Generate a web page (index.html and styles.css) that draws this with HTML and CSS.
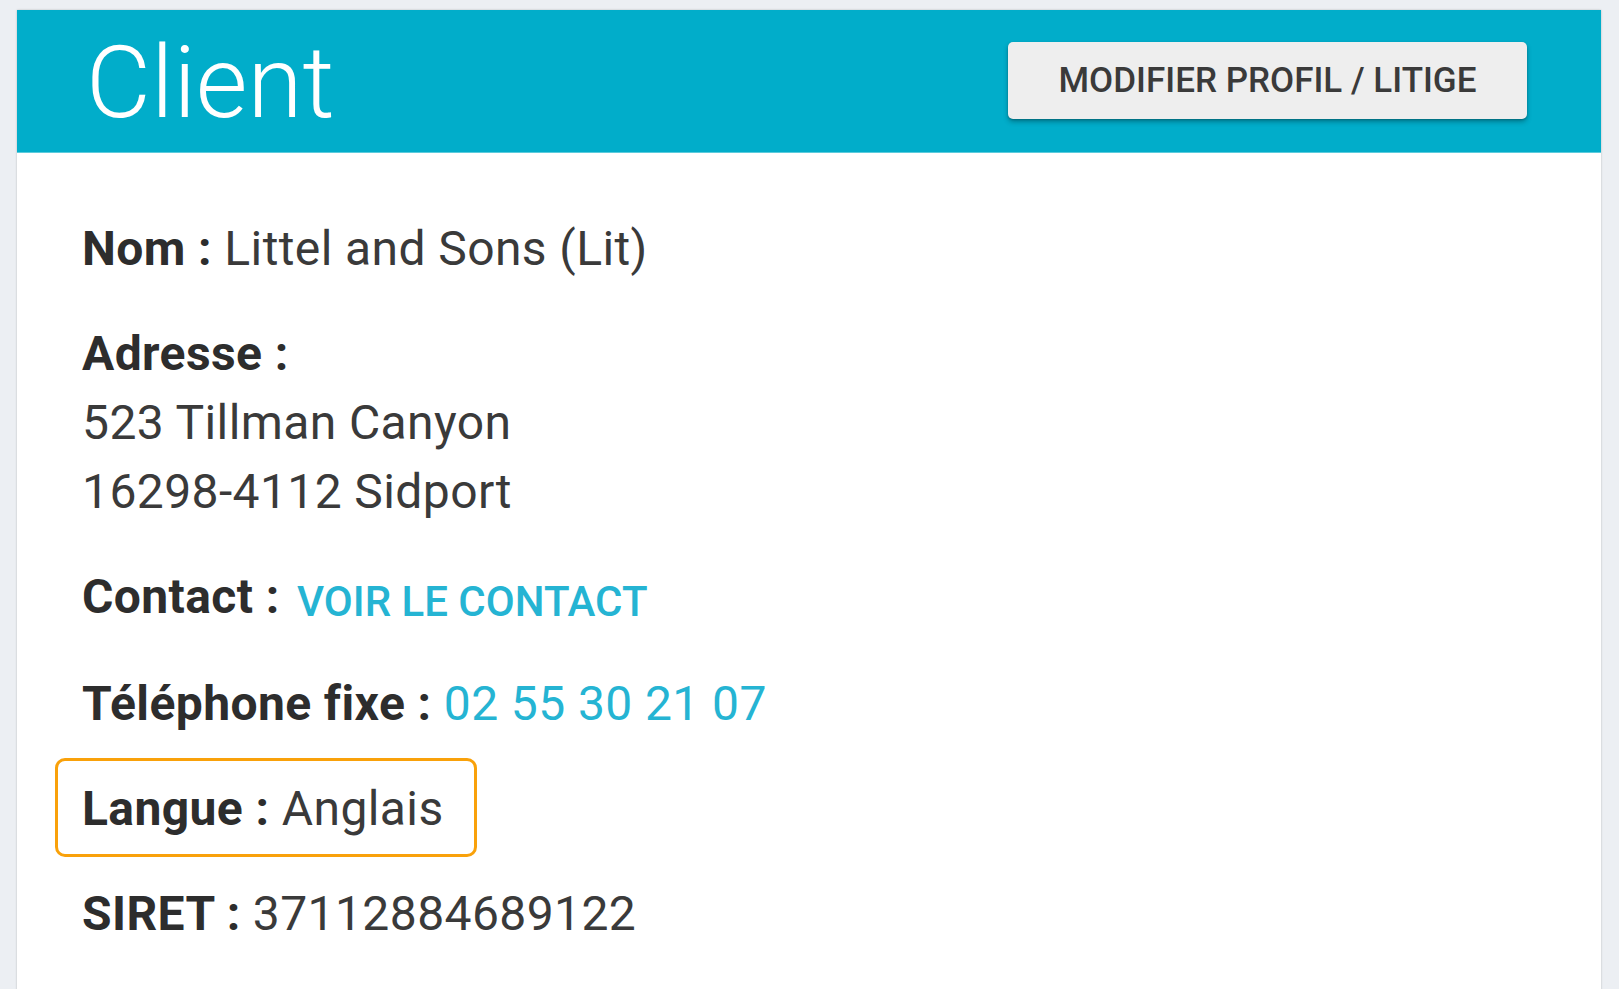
FILE: index.html
```html
<!DOCTYPE html>
<html lang="fr">
<head>
<meta charset="utf-8">
<title>Client</title>
<link rel="stylesheet" href="styles.css">
</head>
<body>
  <section class="card">
    <header class="card-header">
      <h1 class="card-title">Client</h1>
      <button class="btn-raised" type="button">Modifier profil / litige</button>
    </header>
    <div class="card-body">
      <p class="field"><span class="label">Nom :</span> Littel and Sons (Lit)</p>
      <p class="field"><span class="label">Adresse :</span><br>523 Tillman Canyon<br>16298-4112 Sidport</p>
      <p class="field"><span class="label">Contact :</span> <a class="btn-flat" href="#">Voir le contact</a></p>
      <p class="field"><span class="label">Téléphone fixe :</span> <a class="link" href="#">02 55 30 21 07</a></p>
      <p class="field highlight"><span class="label">Langue :</span> Anglais</p>
      <p class="field"><span class="label">SIRET :</span> 37112884689122</p>
    </div>
  </section>
</body>
</html>
```

FILE: styles.css
```css
html, body {
  margin: 0;
  height: 100%;
  overflow: hidden;
}

body {
  background: #eceff3;
  padding: 10px 18px 0 17px;
  box-sizing: border-box;
  font-family: Roboto, "Liberation Sans", Arial, sans-serif;
  color: #333333;
}

.card {
  background: #ffffff;
  height: 1100px;
  box-shadow: 0 0 2px rgba(0, 0, 0, 0.22);
}

.card-header {
  background: #01adca;
  height: 143px;
  display: flex;
  align-items: center;
  justify-content: space-between;
  padding: 0 74px 0 69px;
  box-sizing: border-box;
  border-bottom: 1px solid #5ccbdc;
}

.card-title {
  margin: 0;
  font-weight: 300;
  font-size: 100px;
  line-height: 1;
  color: #ffffff;
  padding-top: 4px;
}

.btn-raised {
  font-family: Roboto, "Liberation Sans", Arial, sans-serif;
  font-weight: 500;
  font-size: 35px;
  text-transform: uppercase;
  color: #3a3a3a;
  background: #eeeeee;
  border: none;
  border-radius: 5px;
  height: 77px;
  width: 519px;
  padding: 0;
  margin-top: -2px;
  box-shadow: 0 3px 5px rgba(0, 0, 0, 0.28), 0 1px 2px rgba(0, 0, 0, 0.18);
}

.card-body {
  padding: 61px 65px 0 65px;
}

.field {
  margin: 0 0 36px;
  font-size: 48px;
  line-height: 69px;
  letter-spacing: 0.4px;
  color: #3a3a3a;
}

.label {
  font-weight: 700;
  color: #2d2d2d;
}

.btn-flat {
  font-weight: 500;
  font-size: 42px;
  letter-spacing: 0;
  text-transform: uppercase;
  color: #25b4d3;
  text-decoration: none;
  margin-left: 5px;
  position: relative;
  top: 3px;
}

.link {
  color: #25b4d3;
  text-decoration: none;
}

.highlight {
  position: relative;
  width: fit-content;
}

.highlight::after {
  content: "";
  position: absolute;
  top: -16px;
  right: -33px;
  bottom: -14px;
  left: -27px;
  border: 3px solid #f9a10a;
  border-radius: 10px;
  pointer-events: none;
}
```
